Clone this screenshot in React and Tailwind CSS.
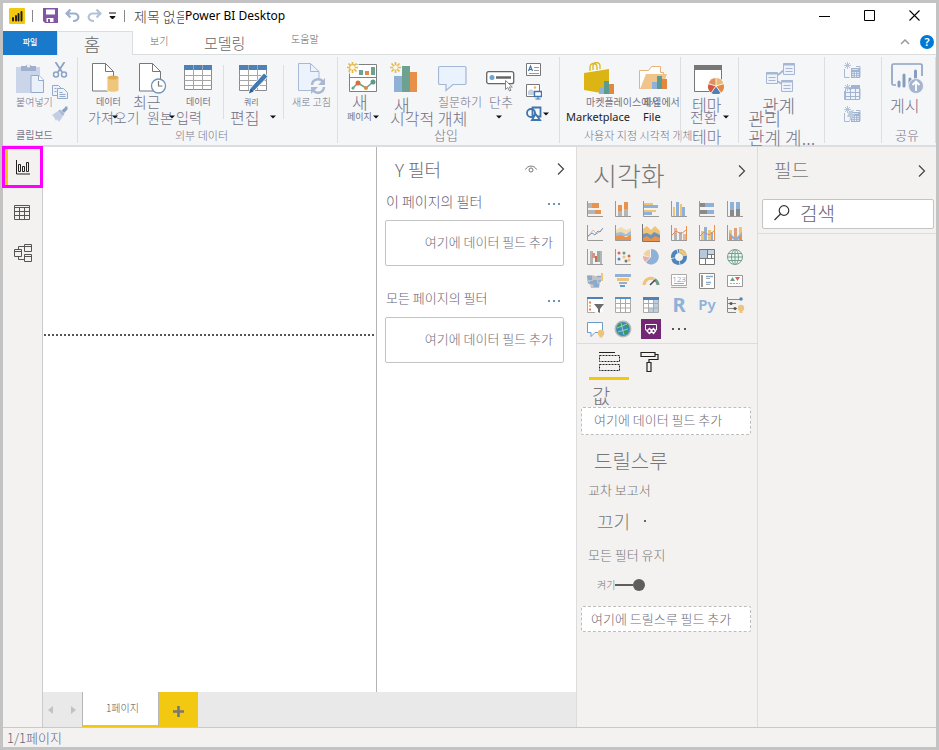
import React from "react";

const FONT = "font-['Noto_Sans','Noto_Sans_CJK_KR',sans-serif]";
const KR = "font-['Noto_Sans_CJK_KR',sans-serif]";

function Caret({ className = "" }) {
  return (
    <svg className={className} width="6" height="4" viewBox="0 0 6 4">
      <path d="M0 .5h6L3 3.500z" fill="#111" />
    </svg>
  );
}

function Chevron({ className = "" }) {
  return (
    <svg className={className} width="8" height="14" viewBox="0 0 8 14" fill="none" stroke="#444" strokeWidth="1.2">
      <path d="M1 1.500 6.500 7 1 12.500" />
    </svg>
  );
}

/* ---------- ribbon icons ---------- */

const Paste = () => (
  <svg width="30" height="32" viewBox="0 0 30 32">
    <path d="M0 5h24v26H0z" fill="#cbd5ea" />
    <path d="M5 4h4.500a3.500 2.500 0 0 1 6 0H20v5H5z" fill="#9fafcd" />
    <circle cx="12.500" cy="4" r="1.500" fill="#f5f6f8" />
    <path d="M15 13.500h8l4.500 4.500v12.500H15z" fill="#eaf1fb" stroke="#94aacb" />
    <path d="M22.500 13.500V18.500h5" fill="#fff" stroke="#94aacb" />
  </svg>
);
const Cut = () => (
  <svg width="16" height="16" viewBox="0 0 16 16" fill="none" stroke="#8ba3c3" strokeWidth="1.800">
    <path d="M3.500 0 10 10M12.500 0 6 10" />
    <circle cx="4" cy="12.500" r="2.500" strokeWidth="1.500" />
    <circle cx="12" cy="12.500" r="2.500" strokeWidth="1.500" />
  </svg>
);
const Copy = () => (
  <svg width="16" height="16" viewBox="0 0 16 16" fill="#eef3fa" stroke="#94aacb">
    <path d="M.5 1.500h6l3 3v7h-9z" />
    <path d="M5.500 4.500h6l4 4v6h-10z" />
    <path d="M7.500 8.500h3M7.500 10.500h6M7.500 12.500h6M2.500 4.500h2M2.500 7.500h2" />
  </svg>
);
const Brush = () => (
  <svg width="16" height="16" viewBox="0 0 16 16">
    <path d="M0 9 6 5l5 5-4 6-2-3-1 2-2-4z" fill="#c3cee2" />
    <path d="m6 5 2-1.500 4.500 4.500L11 10z" fill="#a9b8d0" />
    <path d="M9.500 4.500 13 1.500V.5h2.500v3L12 7z" fill="#8ba3c3" />
  </svg>
);

const docPath = "M.5 1.500h13L21.500 9.500V29H.5z";
const Doc = ({ children }) => (
  <svg width="30" height="32" viewBox="0 0 30 32">
    <path d={docPath} fill="#fff" stroke="#777" />
    <path d="M13.500 1.500V9.500h8" fill="none" stroke="#777" />
    {children}
  </svg>
);
const GetData = () => (
  <Doc>
    <path d="M15 15v13c0 3 12 3 12 0V15z" fill="#efc77b" stroke="#f5f6f8" />
    <ellipse cx="21" cy="15.500" rx="5.500" ry="2" fill="#ddac55" />
  </Doc>
);
const Recent = () => (
  <Doc>
    <circle cx="19.500" cy="24" r="7" fill="#fff" stroke="#6f93bb" strokeWidth="1.300" />
    <path d="M19.500 19v5h4" fill="none" stroke="#777" strokeWidth="1.200" />
  </Doc>
);
const EnterData = ({ edit }) => (
  <svg width="31" height="32" viewBox="0 0 31 32">
    <path d={edit ? "M.5 3.500h27v25H.5z" : "M.5 3.500h27v24H.5z"} fill="#fff" stroke="#8c8c8c" />
    <path d="M0 3h28v5H0z" fill="#4e81b8" />
    <path d="M.5 13.500h27M.5 18.500h27M.5 23.500h27M9.500 3v25M18.500 3v25" stroke="#a6a6a6" />
    {edit && (
      <g>
        <path d="M10 31l1.500-5L25 11l4 3.500L15 29z" fill="#4179b2" stroke="#f5f6f8" />
        <path d="M10 31.500l1.500-5 3 3z" fill="#2f5f93" />
      </g>
    )}
  </svg>
);
const Refresh = () => (
  <svg width="28" height="32" viewBox="0 0 28 32">
    <path d="M.5 1.500h12L21 9.500V28.500H.5z" fill="#edf3fc" stroke="#a9b9d4" />
    <path d="M12.500 1.500V9.500H21" fill="none" stroke="#a9b9d4" />
    <circle cx="20" cy="24" r="8" fill="#f5f6f8" />
    <path d="M14 23a6 6 0 0 1 11-3M26 25a6 6 0 0 1-11 3" fill="none" stroke="#a9b9d4" strokeWidth="2.500" />
    <path d="M27 16v7h-7zM13 32v-7h7z" fill="#a9b9d4" />
  </svg>
);
const Spark = () => (
  <g>
    <path d="M5.500 0v11M0 5.500h11M1.500 1.500l8 8M9.500 1.500l-8 8" stroke="#e8ba4c" strokeWidth="1.700" />
    <circle cx="5.500" cy="5.500" r="2.300" fill="#fdf7dc" />
  </g>
);
const NewPage = () => (
  <svg width="31" height="32" viewBox="0 0 31 32">
    <path d="M2.500 2.500h27v27h-27z" fill="#fff" stroke="#808080" />
    <path d="M2.500 15.500h27" stroke="#808080" />
    <path d="M12 8h4v5h-4zM24 5h4v8h-4z" fill="#6ca28f" />
    <path d="M18 9h4v4h-4z" fill="#e58841" />
    <path d="M5 27l6-6 8 5 7-6" fill="none" stroke="#6ca28f" strokeWidth="1.500" />
    <circle cx="11" cy="21" r="2.500" fill="#d9703c" />
    <circle cx="19" cy="26" r="2" fill="#e58841" />
    <circle cx="26" cy="20" r="2.500" fill="#5c9a85" />
    <circle cx="6" cy="26" r="1.500" fill="#6ca28f" />
    <path d="M0 0h12v12H0z" fill="#f5f6f8" opacity=".6" />
    <Spark />
  </svg>
);
const NewVisual = () => (
  <svg width="28" height="32" viewBox="0 0 28 32">
    <path d="M4 14h8v16H4z" fill="#8fb0d7" />
    <path d="M12 4h8v26h-8z" fill="#6ca28f" />
    <path d="M20 10h7v20h-7z" fill="#e88f49" />
    <Spark />
  </svg>
);
const Ask = () => (
  <svg width="30" height="32" viewBox="0 0 30 32">
    <path d="M2 4.500h24.500a1.500 1.500 0 0 1 1.500 1.500v15a1.500 1.500 0 0 1-1.500 1.500H15l-7 6v-6H2A1.500 1.500 0 0 1 .5 21V6A1.500 1.500 0 0 1 2 4.500z" fill="#eaf2fd" stroke="#a3b6d3" strokeWidth="1.200" />
  </svg>
);
const ButtonIcon = () => (
  <svg width="30" height="32" viewBox="0 0 30 32">
    <rect x=".7" y="9.700" width="27" height="12" rx="2" fill="#fff" stroke="#666" strokeWidth="1.300" />
    <circle cx="6" cy="15.500" r="2.500" fill="#70a4cf" />
    <path d="M10 15.500h15" stroke="#666" strokeWidth="2.500" />
    <path d="M19.500 18.500v9l2.300-2 1.700 3.500 1.500-.8-1.700-3.200h3z" fill="#fff" stroke="#888" />
  </svg>
);
const TextBox = () => (
  <svg width="16" height="16" viewBox="0 0 16 16">
    <path d="M.5 1.500h14v12H.5z" fill="#fff" stroke="#777" />
    <path d="m2.500 9 2-5 2 5M3 7.500h3" fill="none" stroke="#3f75ad" strokeWidth="1.200" />
    <path d="M8 5.500h5M8 8.500h5M3 11.500h10" stroke="#999" />
  </svg>
);
const ImageIcon = () => (
  <svg width="16" height="16" viewBox="0 0 16 16">
    <path d="M.5.5h13v12H.5z" fill="#fff" stroke="#777" />
    <circle cx="9" cy="3.500" r="1.300" fill="#e8b660" />
    <path d="m2 11V7l3-2 3 2v4z" fill="#c6d2df" />
    <path d="M8.500 7.500h7v5h-7z" fill="#fff" stroke="#3f75ad" strokeWidth="1.400" />
    <path d="M12 12v3M9.500 15h5" stroke="#3f75ad" />
  </svg>
);
const Shapes = () => (
  <svg width="16" height="16" viewBox="0 0 16 16" fill="none" stroke="#3f75ad" strokeWidth="1.800">
    <circle cx="5" cy="7" r="4" />
    <path d="M6.500 1.500h8v9h-8z" />
    <path d="M6 14l3.500-6 4.500 6z" fill="#fff" />
  </svg>
);
const Market = () => (
  <svg width="31" height="32" viewBox="0 0 31 32">
    <path d="M6 9V5a3.500 3.500 0 0 1 7 0v3M9 8V4a3.500 3.500 0 0 1 7 0v3" fill="none" stroke="#dcb515" strokeWidth="1.300" />
    <path d="M0 11 25 7v21l-8 3L0 28z" fill="#dcb515" />
    <path d="M15 25h5v7h-5z" fill="#8fb0d7" />
    <path d="M20 19h5v13h-5z" fill="#5b9c90" />
    <path d="M25 22h5v10h-5z" fill="#e2873f" />
  </svg>
);
const FromFile = () => (
  <svg width="31" height="32" viewBox="0 0 31 32">
    <path d="M.5 26.500V8.500h9l3-4h9v6h3v16z" fill="#fff" stroke="#e5b37b" />
    <path d="m1 27 6-15h21l-5 15z" fill="#efc58c" />
    <path d="M13 20h5v7h-5z" fill="#8fb0d7" />
    <path d="M18 14h5v13h-5z" fill="#5b9c90" />
    <path d="M23 17h5v10h-5z" fill="#e2873f" />
  </svg>
);
const Theme = () => (
  <svg width="31" height="32" viewBox="0 0 31 32">
    <path d="M.5 3.500h27v26H.5z" fill="#fff" stroke="#777" />
    <path d="M0 3h28v5H0z" fill="#777" />
    <circle cx="22" cy="24" r="8.800" fill="#f5f6f8" />
    <path d="M22 24V16a8 8 0 0 1 7.500 6z" fill="#e9ba72" />
    <path d="m22 24 7.500-2a8 8 0 0 1-3 9z" fill="#e58841" />
    <path d="m22 24 4.500 7a8 8 0 0 1-9 0z" fill="#4f7fb5" />
    <path d="m22 24-4.500 7a8 8 0 0 1-3-9z" fill="#d2593d" />
    <path d="m22 24-7.500-2a8 8 0 0 1 7.500-6z" fill="#e58d5c" />
    <path d="M22 24v-8.500M22 24l8-2.500M22 24l5 7M22 24l-5 7M22 24l-8-2.500" stroke="#fff" strokeWidth=".8" />
  </svg>
);
const Relation = () => (
  <svg width="31" height="32" viewBox="0 0 31 32">
    <path d="m12 13 6-5M11 19l5 3" stroke="#a7b7d3" strokeWidth="2" />
    <g fill="#edf2fb" stroke="#a7b7d3">
      <path d="M17.500 1.500h11v11h-11zM.5 10.500h11v11H.5zM15.500 18.500h11v11h-11z" />
      <path d="M19.500 6.500h7M19.500 9.500h7M2.500 15.500h7M2.500 18.500h7M17.500 23.500h7M17.500 26.500h7" />
      <path d="M17 2.500h12M0 11.500h12M15 19.500h12" strokeWidth="2" />
    </g>
  </svg>
);
const Calc = ({ kind }) => (
  <svg width="17" height="17" viewBox="0 0 17 17">
    <path d="M.5 7v8.500h5M12 4.500h4V15" fill="none" stroke="#a9b9d3" />
    {kind === 1 ? (
      <g>
        <path d="M1.500 4.500h14v11h-14z" fill="#eef3fb" stroke="#a2b3cf" />
        <path d="M7 1h9v4H7z" fill="#a2b3cf" />
        <path d="M1 8.500h15M1 12.500h15M6.500 5v11M11.500 5v11" stroke="#a2b3cf" />
      </g>
    ) : (
      <g>
        <path d="M7 6h9v10H7z" fill="#a2b3cf" />
        <path d="M8.500 7.500h6M9 10v5M11.500 10v5M14 10v5" stroke="#f5f8fd" strokeWidth="1.200" strokeDasharray="1.200 .8" />
      </g>
    )}
    {kind === 2 && <path d="m5 5 5-1-2 4h3l-6 8 1-5H3z" fill="#bccae0" />}
    <path d="M3.500 0v7M0 3.500h7M1 1l5 5M6 1 1 6" stroke="#b5c3da" />
  </svg>
);
const Publish = () => (
  <svg width="33" height="33" viewBox="0 0 33 33">
    <path d="M5 23H2.500A1.500 1.500 0 0 1 1 21.500V3.500A1.500 1.500 0 0 1 2.500 2h27A1.500 1.500 0 0 1 31 3.500V14" fill="none" stroke="#8fa3c2" strokeWidth="1.700" />
    <g stroke="#869dbf" strokeWidth="3" strokeLinecap="round">
      <path d="M8 20v4M13 13v11M19 17v7M24.500 9v13" />
    </g>
    <circle cx="25" cy="24" r="7.500" fill="#a5b5cf" stroke="#f5f6f8" strokeWidth=".8" />
    <path d="M25 29v-9M21.500 23l3.500-3.500 3.500 3.500" fill="none" stroke="#fff" strokeWidth="1.800" />
  </svg>
);

/* ---------- ribbon layout ---------- */

function Group({ label, labelClass = "", className = "", children }) {
  return (
    <div className={`flex shrink-0 flex-col ${className}`}>
      <div className="flex h-[71px] pt-[7px]">{children}</div>
      <div className={`whitespace-nowrap leading-[18px] text-[#787689] ${labelClass}`}>{label}</div>
    </div>
  );
}

function Sep() {
  return <div className="my-[2px] w-px shrink-0 bg-[#dcdee1]" />;
}

function Item({ icon, iconClass = "", one, oneClass = "leading-4", two, twoClass = "", caretClass, className = "" }) {
  return (
    <button className={`relative flex shrink-0 flex-col items-start whitespace-nowrap text-left text-[#737184] ${className}`}>
      <span className={`block h-8 ${iconClass}`}>{icon}</span>
      <span className={`block ${oneClass}`}>{one}</span>
      {two && <span className={`block leading-[14px] ${twoClass}`}>{two}</span>}
      {caretClass && <Caret className={`absolute top-[53px] ${caretClass}`} />}
    </button>
  );
}

function Ribbon() {
  return (
    <div className={`flex h-[92px] items-stretch border-b-2 border-[#dcdddf] bg-[#f5f6f8] ${KR} font-light`}>
      <Group className="w-[74px] pl-[13px]" label="클립보드" labelClass="text-[10px] font-normal">
        <Item className="w-9 text-[#9391a0]" icon={<Paste />} one="붙여넣기" oneClass="text-[10px] leading-4" />
        <div className="flex flex-col gap-[6px]">
          <button aria-label="잘라내기"><Cut /></button>
          <button aria-label="복사"><Copy /></button>
          <button aria-label="서식 복사"><Brush /></button>
        </div>
      </Group>
      <Sep />
      <Group className="w-[259px] pl-[10px]" label="외부 데이터" labelClass="pl-[87px] text-[11px]">
        <Item className="w-[45px]" icon={<GetData />} iconClass="pl-1" one="데이터" oneClass="pl-2 text-[9px] leading-4 font-normal" two="가져오기" twoClass="text-[14px]" caretClass="left-6" />
        <Item className="w-[43px]" icon={<Recent />} iconClass="pl-[6px]" one="최근" oneClass="text-[15px] leading-4" two="원본" twoClass="pl-[14px] text-[14px]" caretClass="left-[36px]" />
        <Item className="w-[47px]" icon={<EnterData />} iconClass="pl-2" one="데이터" oneClass="pl-[10px] text-[9px] leading-4 font-normal" two="입력" twoClass="text-[14px]" />
        <div className="mt-[3px] h-[54px] w-px bg-[#dcdee1]" />
        <Item className="w-[59px]" icon={<EnterData edit />} iconClass="pl-[15px]" one="쿼리" oneClass="pl-5 text-[8px] leading-4 font-normal" two="편집" twoClass="pl-[6px] text-[16px]" caretClass="left-[46px]" />
        <div className="mt-[3px] h-[54px] w-px bg-[#dcdee1]" />
        <Item className="w-[53px] text-[#9391a0]" icon={<Refresh />} iconClass="pl-[14px]" one="새로 고침" oneClass="pl-2 text-[10px] leading-4" />
      </Group>
      <Sep />
      <Group className="w-[221px] pl-[9px]" label="삽입" labelClass="pl-[87px] text-[13px]">
        <Item className="w-[43px]" icon={<NewPage />} one="새" oneClass="pl-[5px] text-[17px] leading-4" two="페이지" twoClass="text-[9px] font-normal" caretClass="left-[26px]" />
        <Item className="w-[48px] text-[#9391a0]" icon={<NewVisual />} one="새" oneClass="pl-1 text-[17px] leading-[22px]" two="시각적 개체" twoClass="-mt-[5px] text-[16px]" />
        <Item className="w-[48px]" icon={<Ask />} one="질문하기" oneClass="text-[12px] leading-4" />
        <Item className="w-[40px]" icon={<ButtonIcon />} one="단추" oneClass="pl-[3px] text-[13px] leading-4" caretClass="left-[10px]" />
        <div className="flex flex-col gap-[6px]">
          <button aria-label="텍스트 상자"><TextBox /></button>
          <button aria-label="이미지"><ImageIcon /></button>
          <button aria-label="셰이프" className="flex items-center gap-px"><Shapes /><Caret /></button>
        </div>
      </Group>
      <Sep />
      <Group className="w-[120px] pl-[6px]" label="사용자 지정 시각적 개체" labelClass="pl-[18px] text-[11px]">
        <Item className="w-[73px]" icon={<Market />} iconClass="pl-[18px]" one="마켓플레이스에서" oneClass="pl-5 text-[10px] leading-4 font-normal" two="Marketplace" twoClass="font-['Noto_Sans'] text-[11px] font-normal text-[#222]" />
        <Item className="w-[41px]" icon={<FromFile />} one="파일에서" oneClass="pl-1 text-[10px] leading-4 font-normal" two="File" twoClass="pl-1 font-['Noto_Sans'] text-[11px] font-normal text-[#222]" />
      </Group>
      <Sep />
      <Group className="w-[57px] pl-[9px]" label="테마" labelClass="pl-[2px] pt-[3px] text-[16px]">
        <Item className="w-[48px]" icon={<Theme />} iconClass="pl-1" one="테마" oneClass="pl-[2px] text-[16px] leading-5" two="전환" twoClass="-mt-1 text-[15px]" caretClass="left-[33px]" />
      </Group>
      <Sep />
      <Group className="w-[85px] pl-[9px]" label="관계 계..." labelClass="pt-[3px] text-[18px]">
        <Item className="w-[70px] text-[#9391a0]" icon={<Relation />} iconClass="pl-[18px]" one="관계" oneClass="pl-[14px] text-[18px] leading-[22px]" two="관리" twoClass="-mt-[5px] text-[18px]" />
      </Group>
      <Sep />
      <Group className="w-[56px] pl-[19px]" label="">
        <div className="flex flex-col gap-[5px]">
          <button aria-label="새 측정값"><Calc kind={0} /></button>
          <button aria-label="새 열"><Calc kind={1} /></button>
          <button aria-label="새 빠른 측정값"><Calc kind={2} /></button>
        </div>
      </Group>
      <Sep />
      <Group className="w-[53px] pl-2" label="공유" labelClass="pl-[5px] text-[13px]">
        <Item className="w-[40px] text-[#9391a0]" icon={<Publish />} iconClass="pl-px" one="게시" oneClass="text-[16px] leading-[22px]" />
      </Group>
      <Sep />
    </div>
  );
}

/* ---------- visual gallery ---------- */

const O = "#e8924b";
const B = "#8fb1d8";
const Y = "#eec47a";
const G = "#8a8a8a";
const L = "#b5b5b5";
const Axis = () => <path d="M1.500 1v15.500H17" fill="none" stroke="#999" />;
const R = (x, y, w, h, f) => <rect x={x} y={y} width={w} height={h} fill={f} />;

const VISUALS = [
  ["누적 가로 막대형", <>{R(2, 3, 5, 5, L)}{R(6, 3, 7, 5, O)}{R(2, 10, 7, 4, L)}{R(9, 10, 6, 4, O)}<Axis /></>],
  ["누적 세로 막대형", <>{R(4, 5, 4, 7, O)}{R(4, 11, 4, 5, L)}{R(10, 2, 4, 8, O)}{R(10, 9, 4, 7, L)}<Axis /></>],
  ["묶은 가로 막대형", <>{R(2, 3, 9, 2, Y)}{R(2, 5, 14, 3, B)}{R(2, 10, 12, 2, Y)}{R(2, 12, 8, 3, B)}<Axis /></>],
  ["묶은 세로 막대형", <>{R(3, 7, 2, 9, Y)}{R(6, 2, 3, 14, B)}{R(10, 4, 2, 12, Y)}{R(12, 7, 3, 9, B)}<Axis /></>],
  ["100% 누적 가로", <>{R(2, 3, 6, 4, G)}{R(7, 3, 9, 4, B)}{R(2, 10, 8, 4, G)}{R(9, 10, 7, 4, B)}<Axis /></>],
  ["100% 누적 세로", <>{R(4, 2, 4, 9, B)}{R(4, 10, 4, 6, G)}{R(10, 2, 4, 7, B)}{R(10, 9, 4, 7, G)}<Axis /></>],
  ["꺾은선형", <><path d="m2 13 5-7 4 4 6-6" fill="none" stroke="#e3b3aa" /><path d="m2 12 4-3 3 2 3-4 2 1 3-4" fill="none" stroke="#6d9bc8" /><Axis /></>],
  ["영역형", <><path d="m2 6 5-3 5 3 5-2v5H2z" fill="#f2dbb3" /><path d="m2 9 5-1 5 2 5-3v5H2z" fill="#9fc0d8" /><path d="m2 12 5-1 5 2 5-2v5H2z" fill={O} /><Axis /></>],
  ["누적 영역형", <><path d="m1 5 4-3 4 4 4-4 5 5v6H1z" fill={Y} /><path d="m1 10 4-1 4 2 3-3 6 3v5H1z" fill="#6e93b4" /><path d="m1 14 4-2 4 3 4-3 5 2v3H1z" fill={O} /><path d="M.5 0v17.500H18" fill="none" stroke="#777" /></>],
  ["꺾은선 및 누적", <>{R(4, 7, 3, 9, L)}{R(4, 4, 3, 5, "#e7b49b")}{R(9, 8, 3, 8, L)}{R(13, 10, 3, 6, "#dcb7a7")}<path d="m2 11 4-4 5 3 5-4" stroke="#dd8a6b" fill="none" /><path d="M16.500 2v14" stroke={O} /><Axis /></>],
  ["꺾은선 및 묶은", <>{R(3, 7, 3, 9, Y)}{R(6, 3, 3, 13, B)}{R(10, 6, 3, 10, Y)}{R(13, 8, 2, 8, B)}<path d="m2 12 4-4 5 3 5-4" stroke="#dd8a6b" fill="none" /><path d="M16.500 1v15" stroke={O} /><Axis /></>],
  ["리본", <>{R(3, 6, 3, 10, Y)}{R(8, 4, 3, 12, "#dba082")}{R(13, 3, 3, 13, Y)}<path d="m3 8 5 5h3l5-5v4l-4 4H8l-5-4z" fill={B} />{R(3, 12, 3, 4, O)}{R(13, 12, 3, 4, O)}<Axis /></>],
  ["폭포", <>{R(4, 3, 3, 13, L)}{R(6, 5, 3, 5, "#d99282")}{R(9, 8, 3, 6, "#cc6c57")}{R(11, 3, 3, 11, "#8eb0a1")}{R(14, 3, 2, 13, L)}<Axis /></>],
  ["분산형", <><Axis /><circle cx="5" cy="5" r="1.500" fill="#d66b55" /><circle cx="10" cy="5" r="1.500" fill="#6a9b80" /><circle cx="15" cy="8" r="1.500" fill="#d66b55" /><circle cx="5" cy="11" r="1.500" fill="#5488ba" /><circle cx="10" cy="9" r="1.500" fill={Y} /><circle cx="12" cy="13" r="1.500" fill="#777" /><circle cx="15" cy="12" r="1.500" fill={Y} /></>],
  ["원형", <><path d="M9 9V1a7.700 7.700 0 1 1-5 13.500z" fill={B} /><path d="M8 9V1.500A7.500 7.500 0 0 0 1.500 7z" fill={Y} opacity=".7" /><path d="m8 9.500-7-1.500a7 7 0 0 0 2.500 6z" fill="#e7b1a6" /></>],
  ["도넛형", <><circle cx="9" cy="9" r="6" fill="none" stroke="#4f84ba" strokeWidth="4" strokeDasharray="8 .8" /><path d="M9 3a6 6 0 0 1 6 5" fill="none" stroke={Y} strokeWidth="4" /></>],
  ["트리맵", <>{R(1.500, 1.500, 15, 15, "#fff")}{R(2, 2, 7, 8, "#b6c8dc")}{R(9, 2, 7, 4, "#c5d6e8")}<path d="M1.500 1.500h15v15h-15zM9.500 1.500v9M1.500 10.500h15M9.500 6.500h7M7.500 10.500v6M13.500 6v4" fill="none" stroke="#777" /></>],
  ["지도", <g fill="#eef6f1" stroke="#75a08f"><circle cx="9" cy="9" r="7.500" /><ellipse cx="9" cy="9" rx="3.500" ry="7.500" /><path d="M1.500 9h15M2.500 5.500h13M2.500 12.500h13M9 1.500v15" fill="none" /></g>],
  ["등치 지역도", <><path d="M1 3h5l3 1h6l1 3-2 4-1 5H5l-1-4-3-3z" fill="#c3c3c3" /><path d="M1 4h5v4H2zM7 8h4v3l2 1v3H8l-1-3H4v-3h3z" fill="#8aabce" /><path d="M11 4.500h4M2 10l2 2M12 9h3" stroke="#8aabce" strokeWidth="1.500" /><path d="M16 1v8" stroke={Y} strokeWidth="2" /></>],
  ["깔때기", <>{R(1, 2, 16, 3, B)}{R(3, 6, 12, 3, Y)}{R(5, 10, 8, 2, B)}{R(6, 13, 5, 2, "#6d9bc8")}</>],
  ["계기", <><path d="M2 13a7 7 0 0 1 10-6" fill="none" stroke={Y} strokeWidth="3" /><path d="M12.500 7.500A7 7 0 0 1 16 13" fill="none" stroke="#6b9d8a" strokeWidth="3" /><path d="m8 13 5-5" stroke="#444" strokeWidth="1.500" /></>],
  ["카드", <><path d="M1.500 2.500h15v11h-15zM1 15.500h16" fill="#fff" stroke="#aaa" /><text x="9" y="10" textAnchor="middle" fontSize="8" fontFamily="Noto Sans" fill="#5488ba">123</text><path d="M4 11.500h10" stroke="#aaa" /></>],
  ["여러 행 카드", <><path d="M1.500 1.500h15v15h-15z" fill="#fff" stroke="#888" />{R(3, 3, 2, 12, "#999")}<path d="M8 4.500h7M8 10.500h5" stroke="#88aacb" strokeWidth="1.500" /><path d="M8 6.500h4M8 12.500h4" stroke="#aaa" /></>],
  ["KPI", <><path d="M1.500 3.500h15v11h-15z" fill="#fff" stroke="#999" /><path d="m4 9 2.500-4L9 9z" fill="#6b9d8a" /><path d="m9 5h5l-2.500 4z" fill="#d5664e" /><path d="M4 11.500h10" stroke="#aaa" strokeDasharray="2 1" /></>],
  ["슬라이서", <>{R(1, 2, 16, 14, "#fff")}{R(1, 1, 16, 2, "#4e81b8")}<path d="M3 6.500h2M3 13.500h2" stroke="#e08060" strokeWidth="2" /><path d="M3 10h2" stroke={Y} strokeWidth="2" /><path d="M1.500 3v13.500H9" fill="none" stroke="#aaa" /><path d="M8 8h10l-4 5v4l-2-1v-3z" fill="#6d6d6d" /></>],
  ["테이블", <>{R(2, 2, 14, 15, "#fff")}<path d="M1.500 3v13.500h15V3M1.500 7.500h15M1.500 12h15M6.500 3v13M11.500 3v13" fill="none" stroke="#aaa" />{R(1, 1, 16, 2, "#5b8fbd")}</>],
  ["행렬", <>{R(2, 2, 14, 15, "#fff")}{R(12, 3, 4, 13, "#b9cee2")}{R(6, 12, 10, 4, "#b9cee2")}<path d="M1.500 3v13.500h15V3M1.500 7.500h15M1.500 12h15M6.500 3v13M11.500 3v13" fill="none" stroke="#aaa" />{R(1, 1, 16, 3, "#4e81b8")}</>],
  ["R 스크립트", <text x="9" y="16" textAnchor="middle" fontSize="20" fontWeight="700" fontFamily="Noto Sans" fill={B}>R</text>],
  ["Python", <text x="9" y="14" textAnchor="middle" fontSize="15" fontWeight="600" fontFamily="Noto Sans" fill={B}>Py</text>],
  ["주요 영향 요인", <><path d="M1.500 1v15.500M2 3.500h12M2 7.500h5M2 12.500h9M7 7.500h3M2 16.500h8" fill="none" stroke="#888" /><circle cx="15" cy="3" r="1.800" fill="#5488ba" /><circle cx="5" cy="7.500" r="1.500" fill="#555" /><circle cx="9" cy="12.500" r="1.500" fill="#555" /><circle cx="15" cy="12" r="3.200" fill={Y} />{R(13.500, 14, 3, 3, Y)}</>],
  ["질문 및 답변", <><path d="M1.500 2.500h15v10H9l-4 4v-4H1.500z" fill="#fff" stroke="#6d9bc8" /><circle cx="15" cy="13" r="3.200" fill={Y} />{R(13.500, 15, 3, 2.500, Y)}</>],
  ["ArcGIS", <><circle cx="9" cy="9" r="7.700" fill="#398dba" stroke="#b8b8b8" strokeWidth="1.500" /><path d="m5 3 4 1-1 3-3 2-2-2zM10 9l4 1-2 5-3-2zM12 3l3 3-2 2-2-2zM4 11l3 1-1 3z" fill="#3b9a55" /><path d="m3 8 10-4M4 12l10-3M7 3l3 12" stroke="#bde0e5" strokeWidth=".7" /></>],
  ["Power Apps", <><rect x="-1" y="-1" width="20" height="20" fill="#742774" /><path d="M3.500 10V4.500h11V10H13M3.500 10H5" fill="none" stroke="#fff" /><path d="m5 11 2.500-2.500L10 11l-2.500 2.500zM9 11l2.500-2.500L13.500 11l-2 2.500z" fill="none" stroke="#fff" strokeWidth="1.300" /></>],
  ["추가 옵션", <>{R(2, 8, 2, 2, "#555")}{R(8, 8, 2, 2, "#555")}{R(14, 8, 2, 2, "#555")}</>],
];

function TitleBar() {
  return (
    <div className="flex h-7 items-center pb-[3px] pl-[6px] pr-4">
      <svg width="16" height="16" viewBox="0 0 16 16">
        <rect width="16" height="16" rx="1" fill="#f2c811" />
        <path d="M4 10v2.500M7 8v4.500M9.500 6v6.500M12.500 4v8.500" stroke="#1d1a10" strokeWidth="1.900" strokeLinecap="round" />
      </svg>
      <span className="ml-[7px] h-3 w-px bg-[#888]" />
      <button aria-label="저장" className="ml-[10px]">
        <svg width="15" height="15" viewBox="0 0 15 15">
          <path d="M0 0h15v15H2l-2-2z" fill="#8455a3" />
          <path d="M3 1.500h9v5H3zM3.500 10h7v4h-7z" fill="#fff" />
          <path d="M5 11h2v3H5z" fill="#8455a3" />
        </svg>
      </button>
      <button aria-label="실행 취소" className="ml-[7px]">
        <svg width="15" height="14" viewBox="0 0 15 14" fill="none" stroke="#9ab0cd" strokeWidth="2.200">
          <path d="M5.500.5 1.500 4.500 5.500 8.500M1.500 4.500h7.500c6 0 6 7.500-1 7.500" />
        </svg>
      </button>
      <button aria-label="다시 실행" className="ml-[7px]">
        <svg width="15" height="14" viewBox="0 0 15 14" fill="none" stroke="#b3c2d6" strokeWidth="2.200">
          <path d="m9.500.5 4 4-4 4M13.500 4.500H6c-6 0-6 7.500 1 7.500" />
        </svg>
      </button>
      <button aria-label="사용자 지정" className="ml-[7px]">
        <svg width="7" height="8" viewBox="0 0 7 8"><path d="M0 1h7M1 4.500h5L3.500 7z" stroke="#111" fill="#111" /></svg>
      </button>
      <span className="ml-2 h-3 w-px bg-[#888]" />
      <span className={`ml-[9px] w-[50px] overflow-hidden whitespace-nowrap text-[14px] leading-6 font-light text-[#444] ${KR}`}>제목 없음</span>
      <span className="whitespace-nowrap pl-px font-['Noto_Sans'] text-[12px] leading-6 text-black">Power BI Desktop</span>
      <div className="ml-auto flex items-center gap-[34px]">
        <button aria-label="최소화"><svg width="11" height="12" viewBox="0 0 11 12"><path d="M0 6.500h11" stroke="#000" /></svg></button>
        <button aria-label="최대화"><svg width="11" height="11" viewBox="0 0 11 11"><path d="M.5.5h10v10H.5z" fill="none" stroke="#000" /></svg></button>
        <button aria-label="닫기"><svg width="11" height="11" viewBox="0 0 11 11"><path d="m.5.5 10 10M10.500.5l-10 10" stroke="#000" strokeWidth="1.100" /></svg></button>
      </div>
    </div>
  );
}

function TabRow() {
  return (
    <div className={`flex h-6 ${KR} font-light text-[#666]`}>
      <button className="w-[54px] bg-[#1979ca] pb-[2px] text-[8px] font-medium text-white">파일</button>
      <button className="w-[76px] border border-b-0 border-[#dcdddf] bg-[#f5f6f8] pr-[6px] text-[18px] leading-5">홈</button>
      <div className="flex flex-1 items-start border-b border-[#dcdddf] pl-[17px]">
        <button className="w-[54px] text-left text-[10px] leading-5">보기</button>
        <button className="w-[87px] text-left text-[15px] leading-6">모델링</button>
        <button className="text-left text-[10px] leading-4">도움말</button>
        <div className="ml-auto flex items-center gap-[10px] pr-[2px] pt-1">
          <button aria-label="리본 최소화"><svg width="10" height="6" viewBox="0 0 10 6" fill="none" stroke="#999" strokeWidth="1.500"><path d="m1 5 4-4 4 4" /></svg></button>
          <button className="size-[14px] rounded-full bg-[#0078d4] font-['Noto_Sans'] text-[11px] leading-[14px] font-semibold text-white">?</button>
        </div>
      </div>
    </div>
  );
}

function NavRail() {
  return (
    <nav className="flex w-10 shrink-0 flex-col border-r border-[#cbcbcb] bg-[#f3f2f1]">
      <button aria-label="보고서" className="-mx-px -mt-px flex h-[42px] items-center border-3 border-[#ff00ff]">
        <span className="h-full w-[3px] bg-[#f2c811]" />
        <svg className="ml-2" width="14" height="15" viewBox="0 0 14 15" fill="none" stroke="#222">
          <path d="M.5 0v14H14M2.500 4.500h2v7h-2zM6.500 6.500h2v5h-2zM10.500 2.500h2v9h-2z" />
        </svg>
      </button>
      <button aria-label="데이터" className="flex h-[45px] items-center pl-[11px] pt-[3px]">
        <svg width="16" height="15" viewBox="0 0 16 15" fill="none" stroke="#555">
          <path d="M.5.5h15v14H.5zM.5 2.500h15M.5 6.500h15M.5 10.500h15M5.500 2.500v12M10.500 2.500v12" />
        </svg>
      </button>
      <button aria-label="모델" className="flex h-10 items-center pl-[11px]">
        <svg width="18" height="18" viewBox="0 0 18 18" fill="none" stroke="#555">
          <path d="M.5 5.500h7v7h-7zM10.500.5h7v7h-7zM10.500 10.500h7v7h-7zM.5 7.500h7M10.500 2.500h7M10.500 12.500h7M4.500 5.500v-3h6M4.500 12.500v3h6" />
        </svg>
      </button>
    </nav>
  );
}

function FilterSection({ title, className, titleClass }) {
  return (
    <section className={className}>
      <div className="flex items-center justify-between pl-px pr-1">
        <h3 className={`leading-5 text-[#666375] ${titleClass}`}>{title}</h3>
        <button aria-label="추가 옵션" className="pt-[6px]">
          <svg width="12" height="2" viewBox="0 0 12 2"><path d="M0 0h2v2H0zM5 0h2v2H5zM10 0h2v2h-2z" fill="#6d91b8" /></svg>
        </button>
      </div>
      <div className="mt-[9px] rounded-xs border border-[#c4c4c4] pb-[2px] pr-[10px] text-right text-[13px] leading-[42px] text-[#706d7a]">여기에 데이터 필드 추가</div>
    </section>
  );
}

function FiltersPane() {
  return (
    <aside className={`w-[200px] shrink-0 border-l border-[#b3b3b3] pl-2 pr-3 ${KR} font-light`}>
      <div className="flex h-11 items-center pl-[10px]">
        <h2 className="text-[18px] leading-6 text-[#6e6a70]">Y 필터</h2>
        <button aria-label="표시" className="ml-auto">
          <svg width="12" height="8" viewBox="0 0 12 8" fill="none" stroke="#777"><path d="M.5 4.500C2.500 0 9.500 0 11.500 4.500" /><circle cx="6" cy="5" r="2" /></svg>
        </button>
        <button aria-label="축소" className="-mr-px ml-5"><Chevron /></button>
      </div>
      <FilterSection title="이 페이지의 필터" titleClass="text-[14px]" />
      <FilterSection title="모든 페이지의 필터" titleClass="text-[13px]" className="mt-[22px]" />
    </aside>
  );
}

function PageBar() {
  return (
    <div className={`flex h-[35px] bg-[#e9e9e9] ${KR} font-light`}>
      <div className="flex w-[39px] items-center justify-between pl-[5px] pr-[6px]">
        <button aria-label="이전 페이지"><svg width="5" height="8" viewBox="0 0 5 8"><path d="M5 0v8L0 4z" fill="#c2c2c2" /></svg></button>
        <button aria-label="다음 페이지"><svg width="5" height="8" viewBox="0 0 5 8"><path d="M0 0v8l5-4z" fill="#c2c2c2" /></svg></button>
      </div>
      <button className="w-[77px] border-x border-b-2 border-x-[#b5b5b5] border-b-[#f2c811] bg-white pb-[3px] pl-1 text-[10px] text-[#555]">1페이지</button>
      <button aria-label="새 페이지" className="flex w-[39px] items-center justify-center bg-[#f2c811] pt-[3px]">
        <svg width="11" height="11" viewBox="0 0 11 11"><path d="M0 5.500h11M5.500 0v11" stroke="#777" strokeWidth="2.600" /></svg>
      </button>
    </div>
  );
}

function VisualPane() {
  return (
    <aside className={`w-[181px] shrink-0 border-l border-[#dcdcdc] bg-[#f3f2f1] ${KR} font-light text-[#777]`}>
      <div className="flex h-[52px] items-start justify-between pl-4 pr-[11px] pt-[13px]">
        <h2 className="text-[26px] leading-[30px]">시각화</h2>
        <button aria-label="축소" className="pt-1"><Chevron /></button>
      </div>
      <div className="grid grid-cols-[repeat(6,18px)] gap-x-[10px] gap-y-[6px] pl-[9px] pt-[1px]">
        {VISUALS.map(([name, art]) => (
          <button key={name} aria-label={name} className="size-[18px]">
            <svg className="block overflow-visible" width="18" height="18" viewBox="0 0 18 18">{art}</svg>
          </button>
        ))}
      </div>
      <div className="mt-[5px] flex border-t border-[#dcdcdc] pl-3 pt-[6px]">
        <button aria-label="필드" className="flex h-[30px] w-10 flex-col items-center border-b-[3px] border-[#f2c811]">
          <svg width="21" height="23" viewBox="0 0 21 23" fill="none" stroke="#222">
            <path d="M0 2.500h16" />
            <path d="M.5 5.500h20v6H.5zM.5 14.500h20v6H.5z" strokeDasharray="2 1" />
          </svg>
        </button>
        <button aria-label="서식" className="flex h-[26px] w-10 justify-center">
          <svg width="19" height="23" viewBox="0 0 19 23" fill="none" stroke="#222" strokeWidth="1.200">
            <path d="M1 2.500h14v4H1zM15 4.500h3v5H9v3M7 12.500h4v9H7z" />
          </svg>
        </button>
      </div>
      <h3 className="pl-[15px] pt-[5px] text-[20px] leading-[22px]">값</h3>
      <div className="ml-1 mr-[6px] rounded-xs border border-dashed border-[#bdbdbd] bg-white pb-[2px] pl-3 text-[13px] leading-6 text-[#706d7a]">여기에 데이터 필드 추가</div>
      <h3 className="pl-[17px] pt-3 text-[20px] leading-7">드릴스루</h3>
      <p className="pl-[11px] pt-[5px] text-[13px] leading-5">교차 보고서</p>
      <label className="relative flex items-center pl-5 pt-[9px] text-[18px] leading-6">
        <input type="checkbox" className="sr-only" />
        끄기
        <span className="ml-[14px] size-[2px] bg-[#666]" />
      </label>
      <p className="pl-[11px] pt-3 text-[13px] leading-5">모든 필터 유지</p>
      <label className="relative flex items-center pl-5 pt-[10px] text-[10px] leading-5">
        <input type="checkbox" defaultChecked className="sr-only" />
        켜기
        <span className="h-[2px] w-[18px] bg-[#605e5c]" />
        <span className="size-3 rounded-full bg-[#605e5c]" />
      </label>
      <div className="ml-1 mr-[6px] mt-[11px] rounded-xs border border-dashed border-[#bdbdbd] bg-white pl-[9px] text-[13px] leading-6 text-[#706d7a]">여기에 드릴스루 필드 추가</div>
    </aside>
  );
}

function FieldsPane() {
  return (
    <aside className={`w-[179px] shrink-0 border-l border-[#dcdcdc] bg-[#f3f2f1] ${KR} font-light`}>
      <div className="flex h-[52px] items-start justify-between pl-4 pr-[10px] pt-[11px]">
        <h2 className="text-[19px] leading-6 text-[#777]">필드</h2>
        <button aria-label="축소" className="pt-[6px]"><Chevron /></button>
      </div>
      <div className="border-b border-[#dcdcdc] pb-1 pl-1 pr-[2px]">
        <label className="flex h-[30px] items-center rounded-xs border border-[#c4c4c4] bg-white pb-[2px] pl-[11px]">
          <svg className="shrink-0" width="16" height="16" viewBox="0 0 16 16" fill="none" stroke="#333" strokeWidth="1.200">
            <circle cx="10" cy="5.500" r="4.800" />
            <path d="m6.500 9-6 6" />
          </svg>
          <input aria-label="검색" placeholder="검색" className="ml-[10px] min-w-0 flex-1 text-[19px] leading-6 font-light outline-none placeholder:text-[#666375]" />
        </label>
      </div>
    </aside>
  );
}

export default function App() {
  return (
    <div className={`flex min-h-screen flex-col border-3 border-[#c3c3c3] bg-white ${FONT}`}>
      <TitleBar />
      <TabRow />
      <Ribbon />
      <main className="flex flex-1">
        <NavRail />
        <div className="flex min-w-0 flex-1 flex-col">
          <div className="flex flex-1">
            <div className="min-w-0 flex-1 pl-px pr-[2px] pt-[187px]">
              <div className="border-t-2 border-dotted border-[#555]" />
            </div>
            <FiltersPane />
          </div>
          <PageBar />
        </div>
        <VisualPane />
        <FieldsPane />
      </main>
      <footer className={`border-t border-[#c9c9c9] bg-[#f3f2f1] pl-1 text-[13px] leading-[19px] font-light text-[#666375] ${KR}`}>1/1페이지</footer>
    </div>
  );
}
